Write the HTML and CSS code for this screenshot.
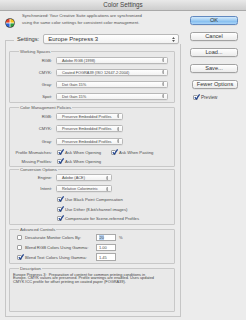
FILE: index.html
```html
<!DOCTYPE html>
<html>
<head>
  <meta charset="utf-8">
  <link rel="stylesheet" href="styles.css">
</head>
<body>
  <div class="titlebar">Color Settings</div>

  <div class="dialog">
    <div class="main">
      <div class="sync">
        <svg class="sync-icon" viewBox="0 0 18 18" width="10" height="10">
          <circle cx="9" cy="9" r="8.6" fill="#3a3a3a"/>
          <path d="M9 9 L9 1.6 A7.4 7.4 0 0 1 16.4 9 Z" fill="#f2c21f"/>
          <path d="M9 9 L16.4 9 A7.4 7.4 0 0 1 9 16.4 Z" fill="#2f9e3f"/>
          <path d="M9 9 L9 16.4 A7.4 7.4 0 0 1 1.6 9 Z" fill="#2a62d4"/>
          <path d="M9 9 L1.6 9 A7.4 7.4 0 0 1 9 1.6 Z" fill="#e2432b"/>
          <path d="M9 1.6 V16.4 M1.6 9 H16.4" stroke="#fff" stroke-width="1.4"/>
        </svg>
        <p>Synchronized: Your Creative Suite applications are synchronized<br>using the same color settings for consistent color management.</p>
      </div>

      <div class="settings-box">
        <div class="settings-row">
          <span class="settings-label">Settings:</span>
          <div class="select select-lg">Europe Prepress 3<svg class="arr" viewBox="0 0 4 7"><path d="M0 2.8 L2 0 L4 2.8 Z M0 4.2 L2 7 L4 4.2 Z"/></svg></div>
        </div>

        <fieldset class="group ws">
          <legend>Working Spaces</legend>
          <div class="grid">
            <span class="lbl">RGB:</span>
            <div class="select w-wide">Adobe RGB (1998)<svg class="arr" viewBox="0 0 4 7"><path d="M0 2.8 L2 0 L4 2.8 Z M0 4.2 L2 7 L4 4.2 Z"/></svg></div>
            <span class="lbl">CMYK:</span>
            <div class="select w-wide">Coated FOGRA39 (ISO 12647-2:2004)<svg class="arr" viewBox="0 0 4 7"><path d="M0 2.8 L2 0 L4 2.8 Z M0 4.2 L2 7 L4 4.2 Z"/></svg></div>
            <span class="lbl">Gray:</span>
            <div class="select w-wide">Dot Gain 15%<svg class="arr" viewBox="0 0 4 7"><path d="M0 2.8 L2 0 L4 2.8 Z M0 4.2 L2 7 L4 4.2 Z"/></svg></div>
            <span class="lbl">Spot:</span>
            <div class="select w-wide">Dot Gain 15%<svg class="arr" viewBox="0 0 4 7"><path d="M0 2.8 L2 0 L4 2.8 Z M0 4.2 L2 7 L4 4.2 Z"/></svg></div>
          </div>
        </fieldset>

        <fieldset class="group cmp">
          <legend>Color Management Policies</legend>
          <div class="grid">
            <span class="lbl">RGB:</span>
            <div class="select w-mid">Preserve Embedded Profiles<svg class="arr" viewBox="0 0 4 7"><path d="M0 2.8 L2 0 L4 2.8 Z M0 4.2 L2 7 L4 4.2 Z"/></svg></div>
            <span class="lbl">CMYK:</span>
            <div class="select w-mid">Preserve Embedded Profiles<svg class="arr" viewBox="0 0 4 7"><path d="M0 2.8 L2 0 L4 2.8 Z M0 4.2 L2 7 L4 4.2 Z"/></svg></div>
            <span class="lbl">Gray:</span>
            <div class="select w-mid">Preserve Embedded Profiles<svg class="arr" viewBox="0 0 4 7"><path d="M0 2.8 L2 0 L4 2.8 Z M0 4.2 L2 7 L4 4.2 Z"/></svg></div>
            <span class="lbl">Profile Mismatches:</span>
            <div class="checks">
              <label class="check"><span class="cb on"><svg viewBox="0 0 6 6"><path d="M0.8 3.2 L2.4 5 L5.6 0.4"/></svg></span>Ask When Opening</label>
              <label class="check"><span class="cb on"><svg viewBox="0 0 6 6"><path d="M0.8 3.2 L2.4 5 L5.6 0.4"/></svg></span>Ask When Pasting</label>
            </div>
            <span class="lbl">Missing Profiles:</span>
            <div class="checks">
              <label class="check"><span class="cb on"><svg viewBox="0 0 6 6"><path d="M0.8 3.2 L2.4 5 L5.6 0.4"/></svg></span>Ask When Opening</label>
            </div>
          </div>
        </fieldset>

        <fieldset class="group conv">
          <legend>Conversion Options</legend>
          <div class="grid">
            <span class="lbl">Engine:</span>
            <div class="select w-sm">Adobe (ACE)<svg class="arr" viewBox="0 0 4 7"><path d="M0 2.8 L2 0 L4 2.8 Z M0 4.2 L2 7 L4 4.2 Z"/></svg></div>
            <span class="lbl">Intent:</span>
            <div class="select w-sm">Relative Colorimetric<svg class="arr" viewBox="0 0 4 7"><path d="M0 2.8 L2 0 L4 2.8 Z M0 4.2 L2 7 L4 4.2 Z"/></svg></div>
            <span></span>
            <label class="check"><span class="cb on"><svg viewBox="0 0 6 6"><path d="M0.8 3.2 L2.4 5 L5.6 0.4"/></svg></span>Use Black Point Compensation</label>
            <span></span>
            <label class="check"><span class="cb on"><svg viewBox="0 0 6 6"><path d="M0.8 3.2 L2.4 5 L5.6 0.4"/></svg></span>Use Dither (8-bit/channel images)</label>
            <span></span>
            <label class="check"><span class="cb on"><svg viewBox="0 0 6 6"><path d="M0.8 3.2 L2.4 5 L5.6 0.4"/></svg></span>Compensate for Scene-referred Profiles</label>
          </div>
        </fieldset>

        <fieldset class="group adv">
          <legend>Advanced Controls</legend>
          <div class="adv-rows">
            <div class="adv-row">
              <label class="check adv-label"><span class="cb"></span>Desaturate Monitor Colors By:</label>
              <span class="field"><span class="sel">20</span></span>
              <span class="unit">%</span>
            </div>
            <div class="adv-row">
              <label class="check adv-label"><span class="cb"></span>Blend RGB Colors Using Gamma:</label>
              <span class="field">1.00</span>
            </div>
            <div class="adv-row">
              <label class="check adv-label"><span class="cb on"><svg viewBox="0 0 6 6"><path d="M0.8 3.2 L2.4 5 L5.6 0.4"/></svg></span>Blend Text Colors Using Gamma:</label>
              <span class="field">1.45</span>
            </div>
          </div>
        </fieldset>

        <fieldset class="group desc">
          <legend>Description</legend>
          <p>Europe Prepress 3:&nbsp; Preparation of content for common printing conditions in<br>Europe. CMYK values are preserved. Profile warnings are enabled. Uses updated<br>CMYK ICC profile for offset printing on coated paper (FOGRA39).</p>
        </fieldset>
      </div>
    </div>

    <div class="side">
      <button class="btn btn-default">OK</button>
      <button class="btn">Cancel</button>
      <button class="btn">Load...</button>
      <button class="btn">Save...</button>
      <button class="btn btn-narrow">Fewer Options</button>
      <label class="check preview"><span class="cb on"><svg viewBox="0 0 6 6"><path d="M0.8 3.2 L2.4 5 L5.6 0.4"/></svg></span>Preview</label>
    </div>
  </div>
</body>
</html>
```

FILE: styles.css
```css
* {
  box-sizing: border-box;
}

body {
  margin: 0;
  width: 246px;
  height: 320px;
  overflow: hidden;
  background: #ececec;
  font-family: 'Liberation Sans', Arial, sans-serif;
  color: #3a3a3a;
}

.titlebar {
  height: 11px;
  background: linear-gradient(#e9e9e9, #cdcdcd);
  border-bottom: 1px solid #a9a9a9;
  text-align: center;
  font-size: 6.3px;
  line-height: 10px;
  color: #444;
}

.dialog {
  display: flex;
}

.main {
  width: 181px;
  padding-left: 5px;
}

/* Sync header */
.sync {
  display: flex;
  align-items: flex-start;
  gap: 7px;
  padding-top: 2px;
}

.sync-icon {
  flex: none;
  margin-top: 5px;
}

.sync p {
  margin: 0;
  font-size: 4.2px;
  line-height: 6.5px;
  color: #505050;
  white-space: nowrap;
}

/* Outer settings box */
.settings-box {
  margin-top: 12px;
  width: 176px;
  border: 1px solid #c6c6c6;
  padding: 0 5px 4px 3px;
}

.settings-row {
  display: flex;
  align-items: center;
  gap: 4px;
  width: fit-content;
  margin: -7px 0 0 5px;
  padding: 0 2px 0 3px;
  background: #ececec;
}

.settings-label {
  font-size: 5.7px;
  color: #333;
}

/* Popup menus */
.select {
  display: flex;
  align-items: center;
  justify-content: space-between;
  height: 7px;
  padding: 0 3px 0 5px;
  border: 1px solid #b8b8b8;
  border-radius: 1.5px;
  background: linear-gradient(#ffffff, #f2f2f2);
  font-size: 3.9px;
  color: #484848;
  white-space: nowrap;
  box-shadow: 0 0.5px 0 rgba(0, 0, 0, 0.08);
}

.select-lg {
  width: 136px;
  height: 10px;
  border-radius: 2px;
  font-size: 6px;
  padding-left: 4px;
  color: #333;
}

.arr {
  width: 2.4px;
  height: 4px;
  fill: #555;
  flex: none;
}

.select-lg .arr {
  width: 3px;
  height: 5px;
}

.w-wide { width: 112px; }
.w-mid { width: 67px; }
.w-sm { width: 56px; }

/* Group boxes */
.group {
  margin: 0;
  padding: 0 4px 0 0;
  border: 1px solid #c8c8c8;
  border-radius: 1px;
  background: #e9e9e9;
}

.group legend {
  margin-left: 9px;
  padding: 0 1px;
  font-size: 4.2px;
  line-height: 5px;
  color: #555;
}

.grid {
  display: grid;
  grid-template-columns: 42px auto;
  column-gap: 4px;
  align-items: center;
  justify-items: start;
}

.lbl {
  justify-self: end;
  font-size: 4.2px;
  color: #4a4a4a;
  white-space: nowrap;
}

.ws {
  margin-top: 4.5px;
}

.ws .grid {
  padding-top: 0.5px;
  grid-auto-rows: 12px;
}

.cmp {
  margin-top: 2px;
}

.cmp .grid {
  grid-template-rows: 12.5px 12.5px 12.5px 9px 9px;
}

.conv {
  margin-top: 0.5px;
}

.conv .grid {
  grid-template-rows: 11px 11px 10.5px 9.5px 9.5px;
}

.adv {
  margin-top: 2.5px;
}

.desc {
  margin-top: 1.5px;
  height: 46.5px;
}

/* Checkboxes */
.checks {
  display: flex;
  gap: 9px;
}

.check {
  display: flex;
  align-items: center;
  gap: 3px;
  font-size: 4.2px;
  color: #4a4a4a;
  white-space: nowrap;
}

.cb {
  flex: none;
  width: 5px;
  height: 5px;
  margin-left: 1px;
  border: 1px solid #a0a0a0;
  border-radius: 1px;
  background: #fff;
}

.cb svg {
  display: block;
  width: 6px;
  height: 6px;
  margin: -2px 0 0 -0.5px;
  overflow: visible;
  fill: none;
  stroke: #24468f;
  stroke-width: 1.3;
}

/* Advanced controls */
.adv-rows {
  display: grid;
  grid-template-rows: 10px 9.5px 10px;
  padding: 0.5px 0 1px 6px;
}

.adv-row {
  display: flex;
  align-items: center;
}

.adv-label {
  width: 80px;
}

.field {
  display: flex;
  align-items: center;
  width: 20px;
  height: 7.5px;
  padding-left: 2px;
  border: 1px solid #a9a9a9;
  background: #fff;
  font-size: 4px;
  color: #4a4a4a;
}

.field .sel {
  background: #b5d3f5;
  padding: 0 0.5px;
}

.unit {
  margin-left: 3px;
  font-size: 4px;
  color: #4a4a4a;
}

/* Description */
.desc p {
  margin: 0;
  padding: 2px 0 0 3px;
  font-size: 3.9px;
  line-height: 3.9px;
  color: #444;
  white-space: nowrap;
}

/* Right column buttons */
.side {
  display: flex;
  flex-direction: column;
  gap: 7px;
  padding: 5px 0 0 9px;
}

.btn {
  width: 48px;
  height: 9px;
  padding: 0;
  border: 1px solid #a2a2a2;
  border-radius: 2.5px;
  background: linear-gradient(#ffffff, #ebebeb);
  font-family: inherit;
  font-size: 5.6px;
  line-height: 7px;
  color: #333;
  box-shadow: 0 0.5px 0 rgba(0, 0, 0, 0.1);
}

.btn-default {
  border-color: #6189c0;
  background: linear-gradient(#d3e9fb, #9ccbf2 50%, #7fbaee 51%, #a9d4f7);
}

.btn-narrow {
  width: 46px;
  margin-left: 2px;
}

.preview {
  margin-top: -1.5px;
  margin-left: 2px;
  font-size: 4.6px;
}
```
